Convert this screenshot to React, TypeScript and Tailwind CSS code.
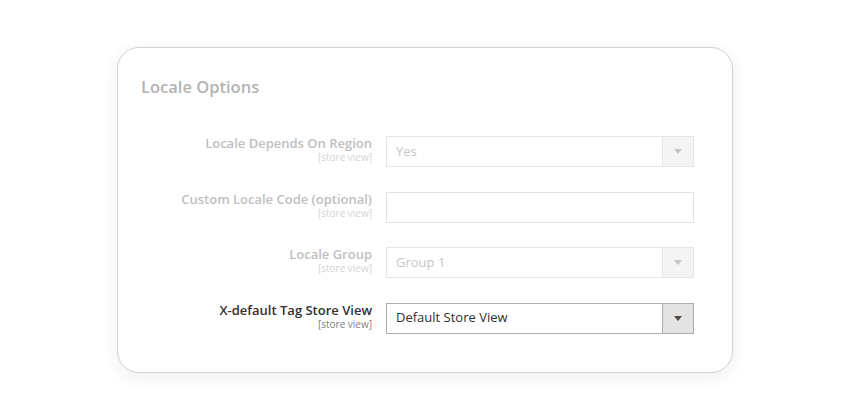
import React from "react";

function Arrow({ disabled }: { disabled?: boolean }) {
  return (
    <svg width="8" height="5" viewBox="0 0 8 5" className="block">
      <path d="M0 0 L8 0 L4 5 Z" fill={disabled ? "#c4c4c4" : "#514943"} />
    </svg>
  );
}

function Row({
  label,
  children,
  disabled,
}: {
  label: string;
  children: React.ReactNode;
  disabled?: boolean;
}) {
  return (
    <div className="flex items-start">
      <div className="w-[231px] text-right mr-[14px]">
        <div
          className={
            disabled
              ? "text-[13px] leading-[15px] font-semibold text-[#c0c0c0]"
              : "text-[13px] leading-[15px] font-semibold text-[#303030]"
          }
        >
          {label}
        </div>
        <div
          className={
            disabled
              ? "text-[10px] leading-[12px] text-[#d4d4d4]"
              : "text-[10px] leading-[12px] text-[#808080]"
          }
        >
          [store view]
        </div>
      </div>
      {children}
    </div>
  );
}

function Select({ value, disabled }: { value: string; disabled?: boolean }) {
  return (
    <div
      className={
        disabled
          ? "flex w-[308px] h-[31px] border border-[#e6e6e6] bg-white"
          : "flex w-[308px] h-[31px] border border-[#adadad] bg-white"
      }
    >
      <div
        className={
          disabled
            ? "flex-1 flex items-center pl-[9px] text-[13px] text-[#c6c6c6]"
            : "flex-1 flex items-center pl-[9px] text-[13px] text-[#303030]"
        }
      >
        {value}
      </div>
      <div
        className={
          disabled
            ? "w-[31px] flex items-center justify-center bg-[#f4f4f4] border-l border-[#e6e6e6]"
            : "w-[31px] flex items-center justify-center bg-[#e3e3e3] border-l border-[#adadad]"
        }
      >
        <Arrow disabled={disabled} />
      </div>
    </div>
  );
}

export default function App() {
  return (
    <div
      className="w-[850px] h-[420px] bg-white pt-[47px] pl-[117px]"
      style={{ fontFamily: '"Open Sans", sans-serif' }}
    >
      <div className="w-[616px] h-[326px] rounded-[22px] border border-[#d2d2d2] bg-white shadow-[0_4px_18px_rgba(0,0,0,0.07)] pl-[23px] pt-[27px]">
        <div className="text-[16.5px] leading-[24px] font-semibold text-[#b3b3b3]">
          Locale Options
        </div>
        <div className="mt-[37px] flex flex-col gap-[24.5px]">
          <Row label="Locale Depends On Region" disabled>
            <Select value="Yes" disabled />
          </Row>
          <Row label="Custom Locale Code (optional)" disabled>
            <div className="w-[308px] h-[31px] border border-[#e3e3e3] bg-white" />
          </Row>
          <Row label="Locale Group" disabled>
            <Select value="Group 1" disabled />
          </Row>
          <Row label="X-default Tag Store View">
            <Select value="Default Store View" />
          </Row>
        </div>
      </div>
    </div>
  );
}
